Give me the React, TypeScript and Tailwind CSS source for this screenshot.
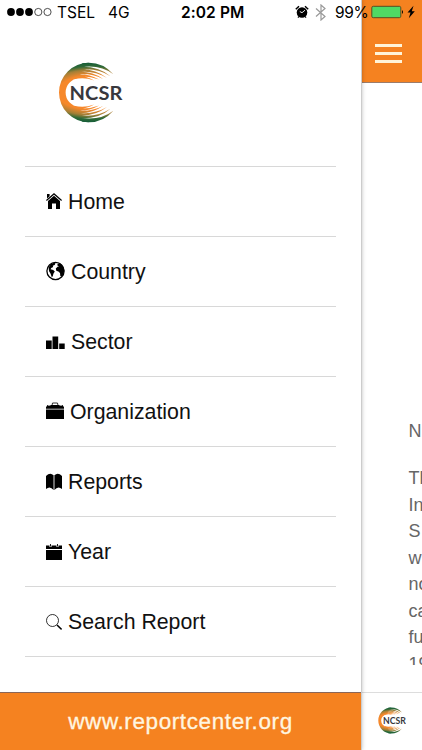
import type { ReactNode } from "react";

type MenuItem = {
  label: string;
  icon: ReactNode;
  width: string;
};

const menu: MenuItem[] = [
  {
    label: "Home",
    width: "w-[16px]",
    icon: (
      <>
        <path d="M0 9.100 8 2l8 7.100-.8.9L8 3.700.8 10z" />
        <path d="M1 3h2.600v2.200L1 7.500zM2 9.900 8 4.700l6 5.200V18h-4v-5.500H6V18H2z" />
      </>
    ),
  },
  {
    label: "Country",
    width: "w-[19px]",
    icon: (
      <>
        <circle cx="9.500" cy="10" r="8.600" fill="none" stroke="currentColor" strokeWidth="1.300" />
        <path d="M2.500 6.500 5 3l3-1.200 1.600.8-1 1.400-1.800.8.4 1.200-2 1-.6 1.300 2.600.6 1.600 1.700-1.400 2.200-.7 2.700-1 .4-1.100-3.200-1.500-2.500z" />
        <path d="m11.500 3 2.500-1 3 3.400 1.300 3.600-.8 4-1.900 2.500-1.300-.5-.3-3-1.600-1.500-2.100-.7-.5-2.300 1.700-1.700 1.500-.3-1.600-1z" />
      </>
    ),
  },
  {
    label: "Sector",
    width: "w-[19px]",
    icon: <path d="M0 9.500h5.700V18H0zM6.500 5.500h5.700V18H6.500zM13.200 12.500h5.500V18h-5.500z" />,
  },
  {
    label: "Organization",
    width: "w-[18px]",
    icon: (
      <>
        <path d="M6 4.500 6.500 2h5l.5 2.500" fill="none" stroke="currentColor" strokeWidth=".8" />
        <path d="M0 6.300 1.500 4h15L18 6.300v1.400H0zM0 8.400h18V18H0z" />
        <path d="M2 4.500h2.500M13.500 4.500H16" stroke="#999" strokeWidth="1" />
      </>
    ),
  },
  {
    label: "Reports",
    width: "w-[16px]",
    icon: (
      <>
        <path d="M0 4Q4-.2 7.600 3.200V18Q4 13.500 0 17zM16 4Q12-.2 8.400 3.200V18Q12 13.500 16 17z" />
        <path d="M8 3.500V18" stroke="#777" strokeWidth=".8" />
      </>
    ),
  },
  {
    label: "Year",
    width: "w-[16px]",
    icon: (
      <>
        <path d="M0 3.500h16V7H0zM0 8h16v10H0z" />
        <path d="M4.500 2v3M11.500 2v3" stroke="#fff" strokeWidth="2" />
        <path d="M4.500 2v2.500M11.500 2v2.500" stroke="currentColor" strokeWidth=".9" />
      </>
    ),
  },
  {
    label: "Search Report",
    width: "w-[16px]",
    icon: (
      <>
        <circle cx="6.500" cy="8.500" r="6" fill="none" stroke="currentColor" strokeWidth=".8" />
        <path d="m11 13 4.600 4.500" stroke="currentColor" strokeWidth="1.500" />
      </>
    ),
  },
];

const paragraph = ["Th", "In", "S", "w", "no", "ca", "fu", "19"];

// tapered strokes that fan out of the top of the ring, mirrored for the bottom
const streaks =
  "M206 73Q176 38 132 38L112 40V51Q168 44 206 73zM197 79Q165 49 108 50V59Q157 53 197 79zM187 84Q150 56 105 58L100 67Q145 60 187 84zM175 87Q140 63 98 66L95 74Q135 68 175 87zM163 89Q130 70 95 73L90 82Q125 75 163 89zM148 92Q120 76 88 79V88Q118 80 148 92z";

function Logo({ className, id }: { className: string; id: string }) {
  const fill = `url(#${id})`;
  return (
    <svg viewBox="40 36 194 184" className={className}>
      <defs>
        <radialGradient id={id} gradientUnits="userSpaceOnUse" cx="140" cy="128" r="92" gradientTransform="translate(-140 0) scale(2 1)">
          <stop offset="0" stopColor="#f6882b" />
          <stop offset=".56" stopColor="#f6882b" />
          <stop offset=".74" stopColor="#a37f36" />
          <stop offset=".86" stopColor="#2f6a38" />
          <stop offset="1" stopColor="#0f5a38" />
        </radialGradient>
      </defs>
      <g fill={fill}>
        <path d="M132 38A90 90 0 0 0 132 218L112 205 105 175Q62 162 62 128 62 94 105 81L112 51z" />
        <path d={streaks} />
        <path d={streaks} transform="matrix(1 0 0 -1 0 256)" />
      </g>
      <text
        x="74"
        y="150"
        fontSize="59"
        fontWeight="700"
        fill="#38383d"
        textLength="159"
        lengthAdjust="spacingAndGlyphs"
        className="font-['Lato',sans-serif]"
      >
        NCSR
      </text>
    </svg>
  );
}

function StatusBar() {
  return (
    <div className="absolute inset-x-0 top-0 z-20 h-[24px] font-['Inter',sans-serif] text-[15.500px] leading-[24px] text-black">
      <svg viewBox="0 0 46 10" className="absolute left-[7px] top-[7px] h-[10px] w-[46px]">
        <circle cx="4" cy="5" r="3.900" />
        <circle cx="13" cy="5" r="3.900" />
        <circle cx="22" cy="5" r="3.900" />
        <g fill="none" stroke="#222" strokeWidth=".8">
          <circle cx="31.300" cy="5" r="3.600" />
          <circle cx="40.500" cy="5" r="3.600" />
        </g>
      </svg>
      <span className="absolute left-[57px] top-px">TSEL</span>
      <span className="absolute left-[108px] top-px">4G</span>
      <span className="absolute left-[181px] top-px whitespace-nowrap font-semibold tracking-[0.1px]">2:02 PM</span>
      <svg viewBox="0 0 14 14" className="absolute left-[295px] top-[5px] h-[14px] w-[14px]">
        <circle cx="7" cy="7.500" r="5.300" />
        <path d="M.8 4.200 4 1.300M13.200 4.200 10 1.300" stroke="#000" strokeWidth="1.500" />
        <path d="M3.800 11.500 3 12.700M10.200 11.500l.8 1.200" stroke="#000" strokeWidth="1.200" />
        <path d="M7 7.700 4.800 6.500M7 7.700l3-2.500" stroke="#fff" strokeWidth=".9" />
      </svg>
      <svg viewBox="0 0 12 17" className="absolute left-[315px] top-[4px] h-[17px] w-[12px]">
        <path d="m1 4.500 9 8L6 16V1l4 3.500-9 8" fill="none" stroke="#999" strokeWidth="1.200" />
      </svg>
      <span className="absolute left-[335px] top-px tracking-[-0.4px]">99%</span>
      <svg viewBox="0 0 46 14" className="absolute left-[371px] top-[5px] h-[14px] w-[46px]">
        <rect x=".8" y="1.300" width="29" height="11.400" rx="1.500" fill="#4fd964" stroke="#594c22" strokeWidth="1" />
        <path d="M31 5q2 2 0 4z" />
        <path d="m42.500.8-6 6.700h3l-1.700 5.700 6-7h-3z" />
      </svg>
    </div>
  );
}

export default function App() {
  return (
    <div className="relative flex h-[750px] w-[422px] overflow-hidden bg-white font-['Liberation_Sans',sans-serif]">
      <aside className="z-10 flex w-[362px] shrink-0 flex-col border-r border-[#ccc] bg-white shadow-[0_0_4px_rgba(0,0,0,0.25)]">
        <div className="h-[165.500px] pl-[58px] pt-[62px]">
          <Logo id="side" className="h-[61px] w-[65px]" />
        </div>
        <nav className="ml-[25px] w-[311px] flex-1 border-t border-[#d8d8d8]">
          {menu.map((item) => (
            <a
              key={item.label}
              className="flex h-[70.140px] items-center gap-[6px] border-b border-[#d8d8d8] pl-[21px] text-[21.300px] text-[#111]"
            >
              <svg
                viewBox={`0 0 ${item.width.slice(3, 5)} 20`}
                className={`${item.width} h-[20px] shrink-0 fill-current text-black`}
              >
                {item.icon}
              </svg>
              <span className="whitespace-nowrap pt-[3px]">{item.label}</span>
            </a>
          ))}
        </nav>
        <footer className="flex h-[58px] items-center justify-center border-t border-[#8a6657] bg-[#f58220] text-[22.500px] tracking-[0.6px] text-[#fff6e0] [-webkit-text-stroke:0.3px_#fff6e0]">
          www.reportcenter.org
        </footer>
      </aside>

      <main className="flex w-[60px] shrink-0 flex-col overflow-hidden">
        <header className="flex h-[83px] flex-col gap-[5px] border-b border-[#9b7c6b] bg-[#f58220] pl-[13px] pt-[44px]">
          <div className="h-[3px] w-[27px] bg-[#fff4d8]" />
          <div className="h-[3px] w-[27px] bg-[#fff4d8]" />
          <div className="h-[3px] w-[27px] bg-[#fff4d8]" />
        </header>
        <div className="h-[582px] overflow-hidden pl-[46.500px] pt-[334.500px] text-[18px] leading-[26.450px] text-[#666]">
          <p className="mb-[21.500px]">N</p>
          {paragraph.map((line) => (
            <p key={line} className="whitespace-nowrap">
              {line}
            </p>
          ))}
        </div>
        <div className="mt-[27px] h-[58px] border-t border-[#ddd] pl-[16px] pt-[14px]">
          <Logo id="tab" className="h-[27px] w-[28px]" />
        </div>
      </main>

      <StatusBar />
    </div>
  );
}
